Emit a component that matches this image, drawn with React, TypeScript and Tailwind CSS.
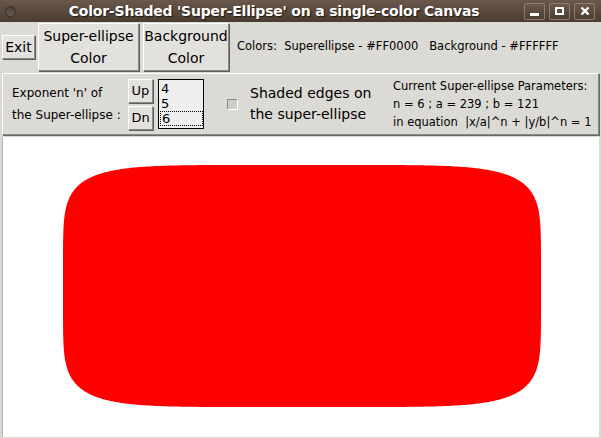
import React from "react";

const FONT = "font-['Comic_Sans_MS','DejaVu_Sans',sans-serif]";

function superEllipsePoints(cx: number, cy: number, a: number, b: number, n: number) {
  const pts: string[] = [];
  const steps = 720;
  for (let i = 0; i < steps; i++) {
    const t = (i / steps) * Math.PI * 2;
    const c = Math.cos(t);
    const s = Math.sin(t);
    const x = cx + a * Math.sign(c) * Math.pow(Math.abs(c), 2 / n);
    const y = cy + b * Math.sign(s) * Math.pow(Math.abs(s), 2 / n);
    pts.push(`${x.toFixed(2)},${y.toFixed(2)}`);
  }
  return pts.join(" ");
}

function TkButton({ children, className = "" }: { children: React.ReactNode; className?: string }) {
  return (
    <div
      className={`flex items-center justify-center text-center border border-t-white border-l-white border-b-[#8c8a86] border-r-[#8c8a86] bg-[#e3e1de] shadow-[1px_1px_0_#5f5d5a] ${className}`}
    >
      {children}
    </div>
  );
}

function WinButton({ children }: { children: React.ReactNode }) {
  return (
    <div className="w-[21px] h-[17px] rounded-[2px] border border-[#8f7c6d] bg-gradient-to-b from-[#6b5a4d] to-[#4b3d33] flex items-center justify-center">
      {children}
    </div>
  );
}

export default function App() {
  return (
    <div className={`w-[601px] h-[438px] bg-[#dcdad5] flex flex-col overflow-hidden ${FONT}`}>
      {/* title bar */}
      <div className="h-[22px] shrink-0 bg-gradient-to-b from-[#6a584b] to-[#4a3c32] flex items-center px-[5px] relative">
        <div className="w-[11px] h-[11px] rounded-full bg-gradient-to-b from-[#4a3d34] to-[#6d5d51] border border-[#3a2f27]" />
        <div className="flex-1 text-center text-white text-[14px] font-bold font-['DejaVu_Sans',sans-serif] [text-shadow:1px_1px_1px_#1e1712] tracking-[-0.2px] pl-[8px]">
          Color-Shaded 'Super-Ellipse' on a single-color Canvas
        </div>
        <div className="flex gap-[4px] mr-[1px]">
          <WinButton>
            <div className="w-[9px] h-[3px] bg-white mt-[6px]" />
          </WinButton>
          <WinButton>
            <div className="w-[9px] h-[8px] border-2 border-white" />
          </WinButton>
          <WinButton>
            <svg width="10" height="10" viewBox="0 0 10 10">
              <path d="M1.5 1.5 L8.5 8.5 M8.5 1.5 L1.5 8.5" stroke="white" strokeWidth="2.4" />
            </svg>
          </WinButton>
        </div>
      </div>

      {/* top button row */}
      <div className="h-[49px] shrink-0 flex items-stretch pt-[1px] pl-[2px] text-black">
        <div className="flex items-center">
          <TkButton className="w-[33px] h-[24px] text-[14px]">Exit</TkButton>
        </div>
        <TkButton className="ml-[3px] w-[101px] text-[14px] leading-[22px] flex-col">
          <span>Super-ellipse</span>
          <span>Color</span>
        </TkButton>
        <TkButton className="ml-[4px] w-[86px] text-[14px] leading-[22px] flex-col">
          <span>Background</span>
          <span>Color</span>
        </TkButton>
        <div className="flex items-center ml-[8px] text-[11.5px] whitespace-pre">
          Colors:  Superellipse - #FF0000   Background - #FFFFFF
        </div>
      </div>

      {/* parameter panel */}
      <div className="mt-[2px] mx-[2px] h-[62px] shrink-0 border border-t-white border-l-white border-b-[#8c8a86] border-r-[#8c8a86] shadow-[1px_1px_0_#6b6966] flex items-center text-black">
        <div className="ml-[9px] text-[12px] leading-[22px] w-[114px]">
          <div>Exponent 'n' of</div>
          <div>the Super-ellipse :</div>
        </div>
        <div className="flex flex-col gap-[3px] ml-[2px]">
          <TkButton className="w-[25px] h-[24px] text-[13px]">Up</TkButton>
          <TkButton className="w-[25px] h-[24px] text-[13px]">Dn</TkButton>
        </div>
        <div className="ml-[5px] w-[46px] h-[50px] border border-black bg-[#efefef] text-[13px] leading-[15px] pl-[1px] pt-[1px] flex flex-col">
          <div className="pl-[1px]">4</div>
          <div className="pl-[1px]">5</div>
          <div className="pl-[1px] border border-dotted border-black w-[43px] leading-[13px]">6</div>
        </div>
        <div className="ml-[23px] w-[11px] h-[11px] border border-t-[#8c8a86] border-l-[#8c8a86] border-b-white border-r-white bg-[#cfcdc9]" />
        <div className="ml-[12px] text-[14px] leading-[21px] w-[132px]">
          <div>Shaded edges on</div>
          <div>the super-ellipse</div>
        </div>
        <div className="ml-[11px] text-[11.5px] leading-[18px] whitespace-nowrap">
          <div>Current Super-ellipse Parameters:</div>
          <div>n = 6 ; a = 239 ; b = 121</div>
          <div className="whitespace-pre">in equation  |x/a|^n + |y/b|^n = 1</div>
        </div>
      </div>

      {/* canvas */}
      <div className="mt-[2px] mx-[2px] mb-[1px] flex-1 bg-white border-l border-[#b8b6b2] relative">
        <svg className="absolute inset-0" width="597" height="297" viewBox="0 0 597 297">
          <polygon points={superEllipsePoints(299, 149, 239, 121, 6)} fill="#ff0000" />
        </svg>
      </div>
    </div>
  );
}
